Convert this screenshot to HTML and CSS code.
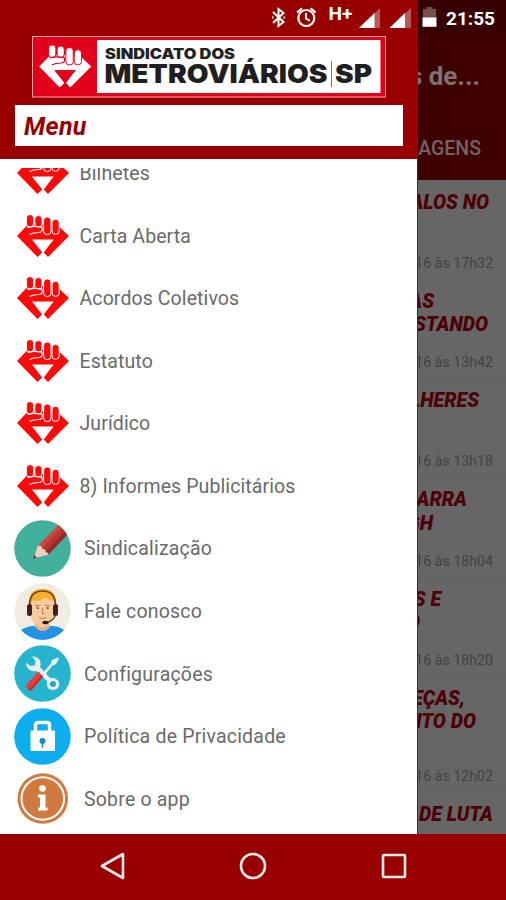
FILE: index.html
```html
<!DOCTYPE html>
<html lang="pt-BR">
<head>
<meta charset="utf-8">
<title>Sindicato dos Metroviários SP</title>
<link rel="stylesheet" href="styles.css">
</head>
<body>
<svg class="defs" width="0" height="0" aria-hidden="true">
  <symbol id="fist" viewBox="0 0 52 42">
    <path d="M0 21 9.500 11 Q26 8 42 11.500L52 21 31 42 26.800 37.500 36.500 24.500H15L25.200 37.500 20.500 42Z"/>
    <path d="M15.500 25H36.500L26.200 35Z" class="cut"/>
    <g class="fingers">
      <rect x="9.400" y="-.4" width="7.200" height="12.400" rx="3.200"/>
      <rect x="17.800" y=".6" width="7.200" height="11.400" rx="3.200"/>
      <rect x="26.600" y="2" width="7.400" height="17.500" rx="3.300"/>
      <rect x="35" y="4.300" width="7.200" height="15" rx="3.300"/>
    </g>
    <path class="thumb" d="M10.500 12.300Q18 10.500 25 12.200Q26.500 17 22 17.500Q16 17.500 12.500 19.500"/>
  </symbol>
</svg>
<div class="phone">
  <header class="status">
    <svg class="status-icons" width="172" height="34" viewBox="268 0 172 34">
      <path d="M273 12 283.500 22 278.500 26V9L283.500 13 273 23" fill="none" stroke="#fff" stroke-width="2"/>
      <path d="M272 17.500h1.500M283.500 17.500h1.500" stroke="#fff" stroke-width="2"/>
      <circle cx="306.300" cy="18" r="8" fill="none" stroke="#fff" stroke-width="2.200"/>
      <path d="M306 13v5.500l4 2.300M297 12.500l5-4.300M315.600 12.500l-5-4.300" fill="none" stroke="#fff" stroke-width="2"/>
      <text x="328.500" y="19.500" textLength="24" lengthAdjust="spacingAndGlyphs" class="network">H+</text>
      <path d="M359 28 380 8V28Z" fill="#b75a5a"/><path d="M359 28 374.500 13V28Z" fill="#fff"/>
      <path d="M389.500 28 411 8V28Z" fill="#b75a5a"/><path d="M389.500 28 405 13V28Z" fill="#fff"/>
      <path d="M423 9h3.500V7h6v2h3.500v9h-13Z" fill="#755050"/><path d="M422.500 17.500H436.500V26.800H422.500Z" fill="#fff"/>
    </svg>
    <span class="clock">21:55</span>
  </header>

  <main class="screen">
    <aside class="drawer">
      <div class="drawer-head">
        <svg class="logo" width="354" height="62" viewBox="0 0 354 62">
          <rect x=".5" y=".5" width="353" height="60.500" fill="#e2001a" stroke="#f5a9a9"/>
          <rect x="65" y="4" width="283.500" height="53" fill="#fff"/>
          <use href="#fist" x="6.500" y="9.500" width="53.500" height="42" class="logo-fist"/>
          <text x="73" y="22.500" textLength="130" lengthAdjust="spacingAndGlyphs" class="logo-small">SINDICATO DOS</text>
          <text x="72.500" y="47" textLength="223" lengthAdjust="spacingAndGlyphs" class="logo-big">METROVIÁRIOS</text>
          <path d="M299.500 25V51" stroke="#777" stroke-width="1"/>
          <text x="303" y="47" textLength="37" lengthAdjust="spacingAndGlyphs" class="logo-big">SP</text>
        </svg>
        <h1 class="menu-title">Menu</h1>
      </div>
      <nav class="menu">
        <ul class="menu-list">
          <li><svg class="fist"><use href="#fist"/></svg><span>Bilhetes</span></li>
          <li><svg class="fist"><use href="#fist"/></svg><span>Carta Aberta</span></li>
          <li><svg class="fist"><use href="#fist"/></svg><span>Acordos Coletivos</span></li>
          <li><svg class="fist"><use href="#fist"/></svg><span>Estatuto</span></li>
          <li><svg class="fist"><use href="#fist"/></svg><span>Jurídico</span></li>
          <li><svg class="fist"><use href="#fist"/></svg><span>8) Informes Publicitários</span></li>
          <li class="round">
            <svg class="disc" viewBox="0 0 57 57">
              <circle cx="28.500" cy="28.500" r="28.300" fill="#41b19b"/>
              <path d="M24 26 44.500 5.200Q50 9 53 15L34.500 34Z" fill="#b93532"/>
              <path d="M24 26 44.500 5.200 47.500 7.500 27.500 28.500Z" fill="#d0483d"/>
              <path d="M31 32 50.500 11.500 53 15 34.500 34.500Z" fill="#8f2b2e"/>
              <path d="M24 25.500Q28 25 28.500 29 32 29 31.500 32 34 32 34.500 34.500L19.500 38.500Z" fill="#f3cfc0"/>
              <path d="M20.300 34.800 23 37.500 19 39Z" fill="#96302f"/>
            </svg><span>Sindicalização</span></li>
          <li class="round">
            <svg class="disc" viewBox="0 0 57 57">
              <circle cx="28.500" cy="28.500" r="28.300" fill="#f1ebe2"/>
              <path d="M7 47Q14 42.500 21 43H36Q44 42.500 50 47A28.300 28.300 0 0 1 7 47Z" fill="#2492e3"/>
              <path d="M21 38H36V44Q28.500 52 21 44Z" fill="#e5b184"/>
              <path d="M16 18Q17 7 28.500 7T41 18V31Q39 43 28.500 44 18 43 16 31Z" fill="#f6ca9c"/>
              <path d="M15.500 23Q13 6 28.500 6T41.500 23L39 17Q35 18 32 14 24 20 18.500 17Z" fill="#f3ae2d"/>
              <path d="M15.500 22Q16 8 28.500 8T41.500 22" fill="none" stroke="#75431b" stroke-width="1.700"/>
              <rect x="13" y="21" width="5" height="12" rx="2.500" fill="#401d21"/>
              <rect x="39" y="21" width="5" height="12" rx="2.500" fill="#401d21"/>
              <path d="M41.500 32Q40 37 33 39.500" fill="none" stroke="#59362a" stroke-width="1.200"/>
              <ellipse cx="31.500" cy="39.500" rx="3.200" ry="1.800" fill="#2c1a1c"/>
              <path d="M21 22.500h5M31 22.500h5" stroke="#b57b3a" stroke-width="1.200"/>
              <circle cx="23.700" cy="25" r="1.100" fill="#61422f"/><circle cx="33.700" cy="25" r="1.100" fill="#61422f"/>
              <path d="M28.500 25v5.500h2M25 34.500Q28.500 36.500 32 34.500" fill="none" stroke="#b97852" stroke-width="1"/>
            </svg><span>Fale conosco</span></li>
          <li class="round">
            <svg class="disc" viewBox="0 0 57 57">
              <circle cx="28.500" cy="28.500" r="28.300" fill="#27b4cf"/>
              <path d="M27 30 37 18.500 38 15 44 12.500 45 14.500 41.500 19.500 38.500 20.500 29 32Z" fill="#f2f7fa"/>
              <path d="M18 11.500Q25 11.500 26.500 17 27 20 26 22L36 33Q41 32 44 35.500 46.500 39.500 44 43 40 46.500 35 44 32 41 33 36L22.500 26Q18 27 14.500 24 12 21.500 12 17.500L16.500 21 21 20.500 21.500 16Z" fill="#e9f0f5"/>
              <path d="M24.500 26.500 29 31.500 18.500 44Q16 46.500 13.500 44 11 41.500 13 39Z" fill="#e83c3b"/>
              <path d="M27.500 30 29 31.500 18.500 44Q16 46.500 14.500 45Z" fill="#c42c34"/>
              <circle cx="39" cy="39" r="3" fill="#27a9c6"/>
            </svg><span>Configurações</span></li>
          <li class="round">
            <svg class="disc" viewBox="0 0 57 57">
              <circle cx="28.500" cy="28.500" r="28.300" fill="#0caeee"/>
              <path d="M21.500 24V17Q21.500 14.500 24 14.500H33Q35.500 14.500 35.500 17V24" fill="none" stroke="#fff" stroke-width="3.400"/>
              <rect x="16.500" y="22.500" width="24.500" height="20.500" rx="1" fill="#fff"/>
              <circle cx="28.500" cy="33" r="3" fill="#158bc6"/><path d="M28.500 34V39.500" stroke="#158bc6" stroke-width="1.600"/>
            </svg><span>Política de Privacidade</span></li>
          <li class="round">
            <svg class="disc" viewBox="0 0 57 57">
              <circle cx="28.800" cy="28.500" r="25.300" fill="#d27940"/>
              <circle cx="28.800" cy="28.500" r="21.300" fill="none" stroke="#fff" stroke-width="2"/>
              <circle cx="28.500" cy="18.500" r="3.300" fill="#fff"/>
              <path d="M24 24.500H31.500V37.500H33.500V40.500H24V37.500H26V27.500H24Z" fill="#fff"/>
            </svg><span>Sobre o app</span></li>
        </ul>
      </nav>
    </aside>

    <section class="page">
      <div class="appbar">
        <div class="app-title">s de...</div>
        <div class="tab">AGENS</div>
      </div>
      <div class="feed">
        <article><h2><b style="margin-right:17px">ALOS NO</b></h2><time>16 às 17h32</time></article>
        <article><h2><b style="margin-right:72px">AS</b><b style="margin-right:18px">STANDO</b></h2><time>16 às 13h42</time></article>
        <article><h2><b style="margin-right:27px">LHERES</b></h2><time>16 às 13h18</time></article>
        <article><h2><b style="margin-right:39px">CARRA</b><b style="margin-right:73px">GH</b></h2><time>16 às 18h04</time></article>
        <article><h2><b style="margin-right:65px">S E</b><b style="margin-right:86px">O</b></h2><time>16 às 18h20</time></article>
        <article class="tall"><h2><b style="margin-right:41px">EÇAS,</b><b style="margin-right:30px">NTO DO</b></h2><time>16 às 12h02</time></article>
        <article><h2><b style="margin-right:13px">DE LUTA</b></h2></article>
      </div>
    </section>
  </main>

  <footer class="navbar">
    <svg viewBox="0 0 28 28"><path d="M3 14 24 2V26Z"/></svg>
    <svg viewBox="0 0 28 28"><circle cx="14" cy="14" r="12"/></svg>
    <svg viewBox="0 0 28 28"><rect x="3" y="3" width="22" height="22" rx="1"/></svg>
  </footer>
</div>
</body>
</html>
```
FILE: styles.css
```css
* { box-sizing: border-box; }
body { margin: 0; font-family: Roboto, "Liberation Sans", sans-serif; }
h1, h2, ul { margin: 0; padding: 0; }
.defs { display: block; }

.phone {
  position: relative;
  width: 506px;
  height: 900px;
  display: flex;
  flex-direction: column;
  overflow: hidden;
  background: #fff;
}

.status {
  position: absolute;
  z-index: 2;
  top: 0;
  right: 11px;
  height: 34px;
  display: flex;
  align-items: center;
  gap: 5px;
  color: #fff;
}
.network { font: 700 18.500px Roboto, sans-serif; fill: #fff; }
.clock { width: 50px; padding: 3px 0 0 1px; font-size: 19px; font-weight: 700; line-height: 24px; white-space: nowrap; }

.screen { flex: 1; min-height: 0; display: grid; grid-template-columns: 416.500px 1fr; }

.drawer { display: flex; flex-direction: column; min-height: 0; background: #fff; }
.drawer-head {
  height: 158.500px;
  flex: none;
  padding: 35.500px 13.500px 0 15px;
  background: #980000;
}
.logo { display: block; margin-left: 17px; }
.logo-fist { fill: #fff; color: #e2001a; }
.logo-small { font: 900 14px Inter, sans-serif; fill: #222; }
.logo-big { font: 900 25.500px Inter, sans-serif; fill: #1f1f21; }
.menu-title {
  height: 41.500px;
  margin-top: 7px;
  padding-left: 9px;
  background: #fff;
  color: #980000;
  font-size: 25px;
  font-style: italic;
  font-weight: 700;
  letter-spacing: .3px;
  line-height: 44px;
}

.menu { flex: 1; min-height: 0; margin-top: 9px; overflow: hidden; }
.menu-list { margin-top: -25.700px; list-style: none; }
.menu-list li {
  height: 62.570px;
  padding-left: 17px;
  display: flex;
  align-items: center;
  gap: 10.500px;
  color: #6a6a6a;
  font-size: 19.500px;
  letter-spacing: .1px;
}
.menu-list .round { padding-left: 14px; gap: 13px; letter-spacing: .2px; }
.menu-list span { padding-top: 1px; }
.fist { flex: none; width: 52px; height: 42px; fill: #fb0a0a; color: #fff; }
.disc { flex: none; width: 57px; height: 57px; }
.cut { fill: currentColor; }
.fingers { stroke: currentColor; stroke-width: 1; }
.thumb { fill: none; stroke: currentColor; stroke-width: 1.200; }

.page {
  min-width: 0;
  display: flex;
  flex-direction: column;
  overflow: hidden;
  background: #666;
  border-left: 1px solid #333;
}
.appbar {
  flex: none;
  height: 180px;
  border-top: 34px solid #380000;
  background: #3f0000;
  color: #7c7070;
  display: flex;
  flex-direction: column;
  align-items: flex-end;
}
.app-title { margin: 25px 26px 0 0; font-size: 26px; font-weight: 700; line-height: 34px; white-space: nowrap; }
.tab { margin: 43.500px 25px 0 0; font-size: 19.500px; font-weight: 500; line-height: 24px; color: #706464; }
.feed { flex: 1; min-height: 0; overflow: hidden; }
.feed article {
  height: 99.300px;
  padding: 10.500px 0 6.500px;
  display: flex;
  flex-direction: column;
  justify-content: space-between;
  border-bottom: 1px solid #5f5f5f;
}
.feed .tall { height: 116px; }
.feed h2 {
  display: flex;
  flex-direction: column;
  align-items: flex-end;
  color: #4d0008;
  font-size: 19.500px;
  font-style: italic;
  line-height: 23.200px;
  white-space: nowrap;
}
.feed time { margin-right: 13px; color: #424242; font-size: 14.200px; line-height: 18px; white-space: nowrap; align-self: flex-end; }

.navbar {
  flex: none;
  height: 66.500px;
  padding: 0 98px 1px 98.500px;
  display: flex;
  align-items: center;
  justify-content: space-between;
  background: #980000;
}
.navbar svg { width: 28px; height: 28px; fill: none; stroke: #ffe9e9; stroke-width: 2.600; stroke-linejoin: round; }
```
